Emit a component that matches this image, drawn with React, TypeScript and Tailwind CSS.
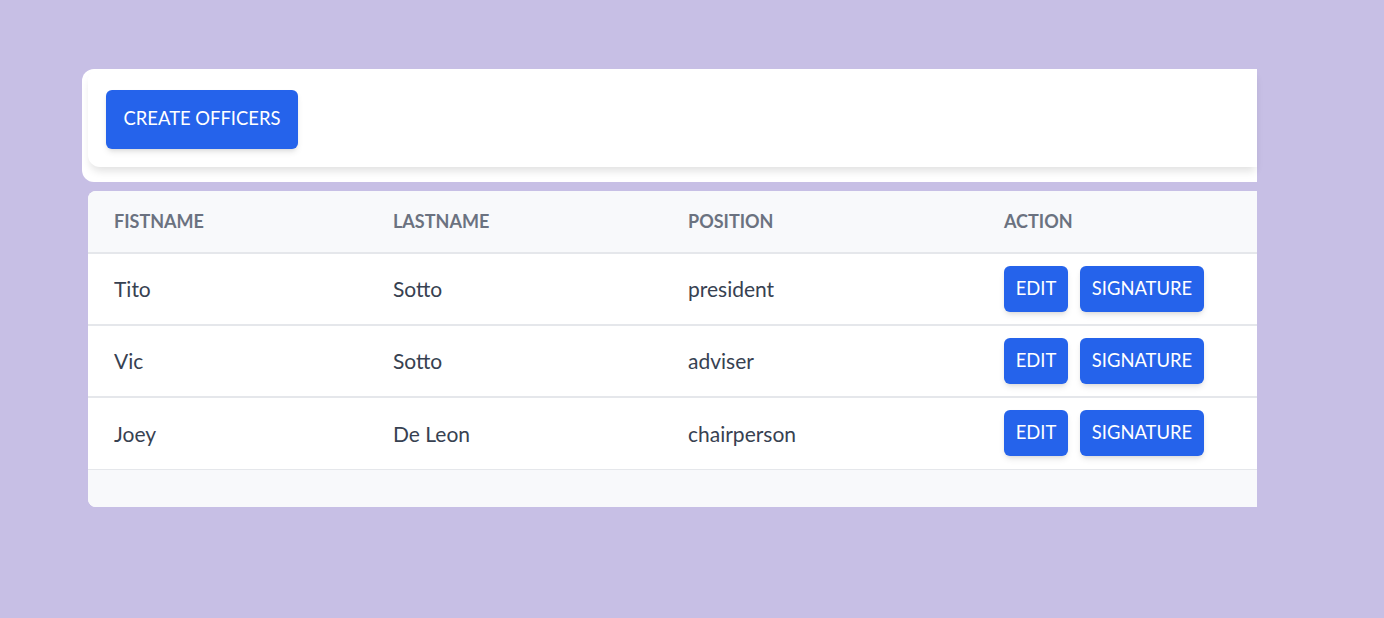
import React from 'react';

const officers = [
  { first: 'Tito', last: 'Sotto', position: 'president' },
  { first: 'Vic', last: 'Sotto', position: 'adviser' },
  { first: 'Joey', last: 'De Leon', position: 'chairperson' },
];

export default function App() {
  return (
    <div
      className="w-[1384px] h-[618px] bg-[#c7bfe5] pt-[69px] pl-[82px] overflow-hidden"
      style={{ fontFamily: 'Lato, "Noto Sans", sans-serif' }}
    >
      <div className="w-[1175px]">
        {/* Toolbar card */}
        <div className="bg-white rounded-l-xl pl-[6px] pb-[15px]">
          <div className="bg-white rounded-l-xl shadow-[0_6px_8px_-2px_rgba(0,0,0,0.12)] h-[98px] flex items-center pl-[18px] pt-[2px]">
            <button className="h-[59px] w-[192px] rounded-md bg-[#2563eb] text-white text-[18.4px] uppercase shadow-md">
              Create Officers
            </button>
          </div>
        </div>

        {/* Officers table */}
        <div className="mt-[9px] ml-[6px] rounded-l-lg overflow-hidden bg-white">
          <table className="w-[1169px] table-fixed border-collapse">
            <colgroup>
              <col className="w-[279px]" />
              <col className="w-[295px]" />
              <col className="w-[316px]" />
              <col className="w-[279px]" />
            </colgroup>
            <thead>
              <tr className="bg-[#f8f9fb] h-[62px] text-left">
                <th className="pl-[26px] text-[18px] font-bold text-[#6b7280]">FISTNAME</th>
                <th className="pl-[26px] text-[18px] font-bold text-[#6b7280]">LASTNAME</th>
                <th className="pl-[26px] text-[18px] font-bold text-[#6b7280]">POSITION</th>
                <th className="pl-[26px] text-[18px] font-bold text-[#6b7280]">ACTION</th>
              </tr>
            </thead>
            <tbody>
              {officers.map((o) => (
                <tr key={o.first} className="h-[72px] border-t-2 border-[#e5e7eb] text-[21px] text-[#374151]">
                  <td className="pl-[26px]">{o.first}</td>
                  <td className="pl-[26px]">{o.last}</td>
                  <td className="pl-[26px]">{o.position}</td>
                  <td className="pl-[26px]">
                    <div className="flex gap-3">
                      <button className="h-[46px] w-[64px] rounded-md bg-[#2563eb] text-white text-[18.4px] shadow-md">
                        EDIT
                      </button>
                      <button className="h-[46px] w-[124px] rounded-md bg-[#2563eb] text-white text-[18.4px] shadow-md">
                        SIGNATURE
                      </button>
                    </div>
                  </td>
                </tr>
              ))}
              <tr className="h-[38px] bg-[#f8f9fb] border-t border-[#e5e7eb]">
                <td colSpan={4} />
              </tr>
            </tbody>
          </table>
        </div>
      </div>
    </div>
  );
}
